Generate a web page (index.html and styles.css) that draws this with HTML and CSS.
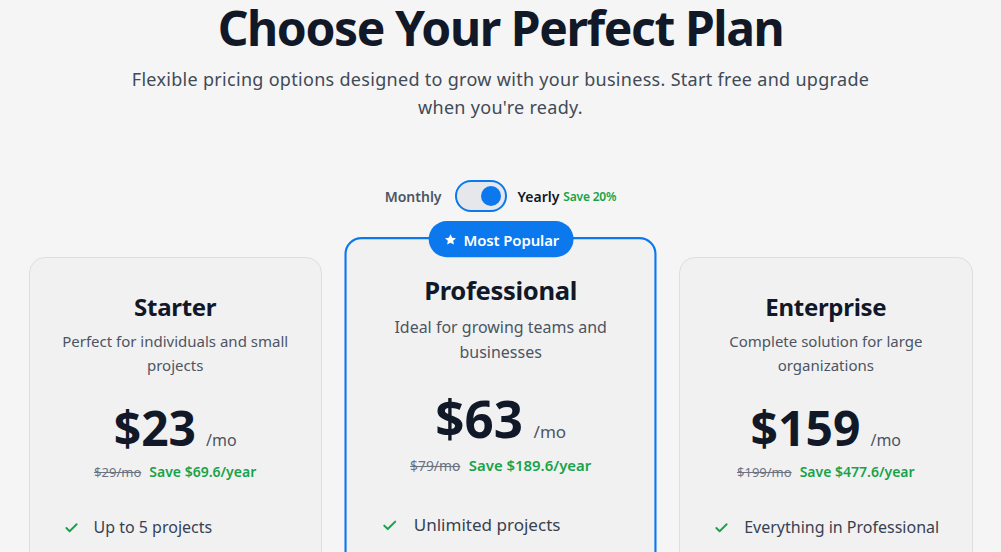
FILE: index.html
```html
<!DOCTYPE html>
<html lang="en">
<head>
<meta charset="utf-8">
<title>Pricing</title>
<link rel="stylesheet" href="styles.css">
</head>
<body>
<main class="page">
  <header class="hero">
    <h1 class="hero-title">Choose Your Perfect Plan</h1>
    <p class="hero-sub">Flexible pricing options designed to grow with your business. Start free and upgrade when you're ready.</p>
  </header>

  <div class="billing">
    <span class="billing-label">Monthly</span>
    <span class="switch"><span class="knob"></span></span>
    <span class="billing-label billing-label--active">Yearly</span>
    <span class="billing-save">Save 20%</span>
  </div>

  <section class="plans">
    <article class="plan">
      <h2 class="plan-name">Starter</h2>
      <p class="plan-desc">Perfect for individuals and small projects</p>
      <div class="plan-price"><span class="amount">$23</span><span class="per">/mo</span></div>
      <div class="plan-compare"><span class="old">$29/mo</span><span class="save">Save $69.6/year</span></div>
      <ul class="features">
        <li><svg class="check" viewBox="0 0 16 16"><path d="M2.5 8.5l3.5 3.5 7.5-7.5"/></svg>Up to 5 projects</li>
        <li><svg class="check" viewBox="0 0 16 16"><path d="M2.5 8.5l3.5 3.5 7.5-7.5"/></svg>10GB storage</li>
        <li><svg class="check" viewBox="0 0 16 16"><path d="M2.5 8.5l3.5 3.5 7.5-7.5"/></svg>Basic analytics</li>
        <li><svg class="check" viewBox="0 0 16 16"><path d="M2.5 8.5l3.5 3.5 7.5-7.5"/></svg>Email support</li>
      </ul>
      <button class="plan-btn">Get Started</button>
    </article>

    <article class="plan plan--popular">
      <span class="badge"><svg class="star" viewBox="0 0 24 24"><path d="M12 2.5l2.9 6.1 6.6.8-4.9 4.6 1.3 6.6L12 17.3l-5.9 3.3 1.3-6.6-4.9-4.6 6.6-.8z"/></svg>Most Popular</span>
      <h2 class="plan-name">Professional</h2>
      <p class="plan-desc">Ideal for growing teams and businesses</p>
      <div class="plan-price"><span class="amount">$63</span><span class="per">/mo</span></div>
      <div class="plan-compare"><span class="old">$79/mo</span><span class="save">Save $189.6/year</span></div>
      <ul class="features">
        <li><svg class="check" viewBox="0 0 16 16"><path d="M2.5 8.5l3.5 3.5 7.5-7.5"/></svg>Unlimited projects</li>
        <li><svg class="check" viewBox="0 0 16 16"><path d="M2.5 8.5l3.5 3.5 7.5-7.5"/></svg>100GB storage</li>
        <li><svg class="check" viewBox="0 0 16 16"><path d="M2.5 8.5l3.5 3.5 7.5-7.5"/></svg>Advanced analytics</li>
        <li><svg class="check" viewBox="0 0 16 16"><path d="M2.5 8.5l3.5 3.5 7.5-7.5"/></svg>Priority support</li>
      </ul>
      <button class="plan-btn plan-btn--primary">Get Started</button>
    </article>

    <article class="plan">
      <h2 class="plan-name">Enterprise</h2>
      <p class="plan-desc">Complete solution for large organizations</p>
      <div class="plan-price"><span class="amount">$159</span><span class="per">/mo</span></div>
      <div class="plan-compare"><span class="old">$199/mo</span><span class="save">Save $477.6/year</span></div>
      <ul class="features">
        <li><svg class="check" viewBox="0 0 16 16"><path d="M2.5 8.5l3.5 3.5 7.5-7.5"/></svg>Everything in Professional</li>
        <li><svg class="check" viewBox="0 0 16 16"><path d="M2.5 8.5l3.5 3.5 7.5-7.5"/></svg>Unlimited storage</li>
        <li><svg class="check" viewBox="0 0 16 16"><path d="M2.5 8.5l3.5 3.5 7.5-7.5"/></svg>Custom integrations</li>
        <li><svg class="check" viewBox="0 0 16 16"><path d="M2.5 8.5l3.5 3.5 7.5-7.5"/></svg>Dedicated manager</li>
      </ul>
      <button class="plan-btn">Contact Sales</button>
    </article>
  </section>
</main>
</body>
</html>
```

FILE: styles.css
```css
* { box-sizing: border-box; }

html, body {
  margin: 0;
  padding: 0;
  background: #f5f5f5;
  overflow: hidden;
}

body {
  font-family: "Noto Sans", "Open Sans", sans-serif;
  color: #111827;
}

.page {
  width: 944px;
  margin: 0 auto;
}

.hero {
  text-align: center;
}

.hero-title {
  margin: 0;
  font-size: 48px;
  line-height: 56px;
  font-weight: 700;
  color: #111827;
  letter-spacing: -1.4px;
}

.hero-sub {
  margin: 9px auto 0;
  max-width: 760px;
  font-size: 18px;
  line-height: 28px;
  color: #414a57;
  letter-spacing: 0.3px;
}

.billing {
  margin-top: 59px;
  display: flex;
  align-items: center;
  justify-content: center;
  height: 32px;
}

.billing-label {
  font-size: 14px;
  font-weight: 600;
  color: #4b5563;
}

.billing-label--active {
  color: #111827;
}

.switch {
  width: 52px;
  height: 32px;
  margin: 0 11px 0 13px;
  border: 2px solid #0b78ee;
  border-radius: 16px;
  background: #e5e7eb;
  display: flex;
  align-items: center;
  justify-content: flex-end;
  padding: 0 4px;
}

.knob {
  width: 20px;
  height: 20px;
  border-radius: 50%;
  background: #0b78ee;
}

.billing-save {
  margin-left: 4px;
  font-size: 12px;
  font-weight: 600;
  color: #16a34a;
  letter-spacing: -0.2px;
}

.plans {
  margin-top: 45px;
  display: grid;
  grid-template-columns: repeat(3, 1fr);
  gap: 32px;
  align-items: start;
}

.plan {
  position: relative;
  background: #f2f1f1;
  border: 1px solid #dedede;
  border-radius: 16px;
  padding: 31px 31px 32px;
  text-align: center;
  height: 615px;
}

.plan--popular {
  border: 2px solid #0b78ee;
  padding: 30px 30px 31px;
  transform-origin: 50% 0;
  transform: translateY(-20px) scale(1.065);
}

.badge {
  position: absolute;
  top: -17px;
  left: 50%;
  transform: translateX(-50%);
  display: flex;
  align-items: center;
  gap: 6px;
  height: 34px;
  padding: 0 13px 0 14px;
  border-radius: 17px;
  background: #0b78ee;
  color: #fff;
  font-size: 14px;
  font-weight: 600;
  letter-spacing: -0.1px;
  white-space: nowrap;
}

.star {
  width: 13px;
  height: 13px;
  fill: #fff;
}

.plan-name {
  margin: 0;
  font-size: 24px;
  line-height: 36px;
  font-weight: 700;
  color: #111827;
  letter-spacing: -0.3px;
}

.plan-desc {
  margin: 4px auto 0;
  max-width: 240px;
  font-size: 15px;
  line-height: 24px;
  color: #4b5563;
}

.plan-price {
  margin-top: 27px;
  display: flex;
  align-items: baseline;
  justify-content: center;
  gap: 10px;
  height: 48px;
}

.amount {
  font-size: 48px;
  line-height: 48px;
  font-weight: 700;
  color: #111827;
}

.per {
  font-size: 16px;
  color: #4b5563;
}

.plan-compare {
  margin-top: 10px;
  display: flex;
  justify-content: center;
  align-items: baseline;
  gap: 8px;
  line-height: 20px;
}

.old {
  font-size: 13px;
  color: #6b7280;
  text-decoration: line-through;
}

.save {
  font-size: 14px;
  font-weight: 600;
  color: #16a34a;
}

.features {
  list-style: none;
  margin: 33px 0 0;
  padding: 0 0 0 3px;
  text-align: left;
}

.features li {
  display: flex;
  align-items: center;
  gap: 15px;
  font-size: 16px;
  line-height: 24px;
  color: #374151;
  margin-bottom: 20px;
}

.check {
  width: 15px;
  height: 15px;
  fill: none;
  stroke: #16a34a;
  stroke-width: 2;
  stroke-linecap: round;
  stroke-linejoin: round;
  flex: none;
}

.plan-btn {
  margin-top: 16px;
  width: 100%;
  height: 48px;
  border-radius: 10px;
  border: 1px solid #d1d5db;
  background: #fff;
  font: inherit;
  font-weight: 600;
  color: #111827;
}

.plan-btn--primary {
  background: #0b78ee;
  border-color: #0b78ee;
  color: #fff;
}
```
